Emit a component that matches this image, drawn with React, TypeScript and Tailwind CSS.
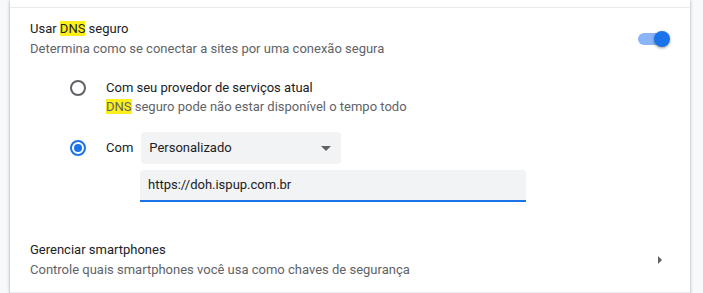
import React from 'react';

const Hit = ({ children }: { children: React.ReactNode }) => (
  <span className="bg-[#fdee1c]">{children}</span>
);

function Toggle() {
  return (
    <div className="relative h-4 w-[32px]">
      <div className="absolute left-0 top-[2px] h-3 w-[28px] rounded-full bg-[#8ab4f8]" />
      <div className="absolute right-0 top-0 h-4 w-4 rounded-full bg-[#1a73e8] shadow-[0_1px_3px_rgba(0,0,0,0.4)]" />
    </div>
  );
}

function Radio({ checked }: { checked?: boolean }) {
  return (
    <div
      className={
        checked
          ? 'flex h-4 w-4 items-center justify-center rounded-full border-2 border-[#1a73e8]'
          : 'h-4 w-4 rounded-full border-2 border-[#5f6368]'
      }
    >
      {checked && <div className="h-2 w-2 rounded-full bg-[#1a73e8]" />}
    </div>
  );
}

export default function App() {
  return (
    <div
      className="h-[293px] w-[703px] overflow-hidden bg-[#f8f9fa] pl-[10px] pr-[13px] text-[13px] leading-5 text-[#202124]"
      style={{ fontFamily: 'Roboto, "Liberation Sans", sans-serif' }}
    >
      <div className="h-full bg-white shadow-[0_1px_2px_rgba(60,64,67,0.3),0_1px_3px_1px_rgba(60,64,67,0.15)] pt-[7px]">
        {/* secure dns row */}
        <div className="border-t border-[#e8eaed] px-5 pt-[11px]">
          <div className="flex items-center justify-between">
            <div>
              <div>
                Usar <Hit>DNS</Hit> seguro
              </div>
              <div className="text-[#5f6368]">Determina como se conectar a sites por uma conexão segura</div>
            </div>
            <Toggle />
          </div>

          <div className="pl-10 pt-[19px]">
            <div className="flex items-start">
              <div className="pt-[2px]">
                <Radio />
              </div>
              <div className="ml-5">
                <div>Com seu provedor de serviços atual</div>
                <div className="-mt-[1px] text-[#5f6368]">
                  <Hit>DNS</Hit> seguro pode não estar disponível o tempo todo
                </div>
              </div>
            </div>

            <div className="mt-[15px] flex items-center">
              <Radio checked />
              <span className="ml-5">Com</span>
              <div className="ml-2 flex h-8 w-[200px] items-center justify-between rounded bg-[#f1f3f4] pl-2 pr-[10px]">
                <span>Personalizado</span>
                <svg width="10" height="5" viewBox="0 0 10 5">
                  <path d="M0 0 L10 0 L5 5 Z" fill="#5f6368" />
                </svg>
              </div>
            </div>

            <div className="ml-[70px] mt-[6px] flex h-8 w-[386px] items-center rounded-t bg-[#f1f3f4] border-b-2 border-[#1a73e8] pl-2">
              https://doh.ispup.com.br
            </div>
          </div>
        </div>

        {/* phones row */}
        <div className="mt-[38px] flex items-center justify-between px-5 pb-[12px]">
          <div>
            <div>Gerenciar smartphones</div>
            <div className="text-[#5f6368]">Controle quais smartphones você usa como chaves de segurança</div>
          </div>
          <svg width="20" height="20" viewBox="0 0 20 20">
            <path d="M8 6 L12 10 L8 14 Z" fill="#5f6368" />
          </svg>
        </div>
        <div className="border-t border-[#e8eaed]" />
      </div>
    </div>
  );
}
